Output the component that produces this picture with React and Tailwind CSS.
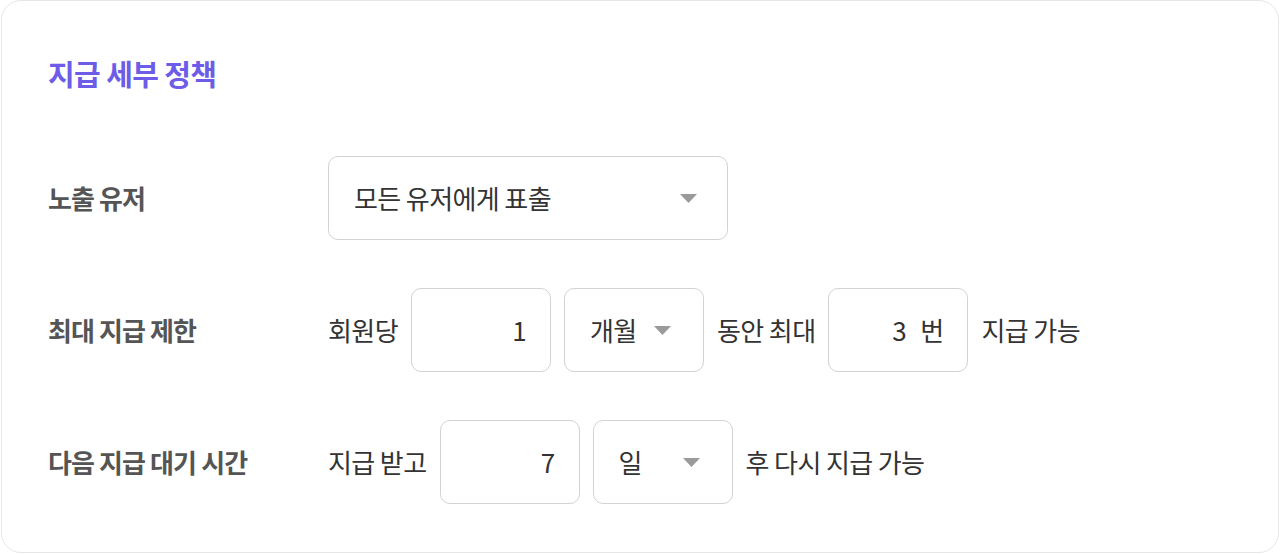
import React from 'react';

function Caret() {
  return (
    <svg className="w-[17px] h-[9px] flex-shrink-0" viewBox="0 0 17 9">
      <path d="M0 0h17L8.5 9z" fill="#9a9a9a" />
    </svg>
  );
}

function SelectBox({ value, className }) {
  return (
    <div className={`h-[84px] flex items-center justify-between border border-[#d2d2d2] rounded-[10px] bg-white pl-[25px] ${className}`}>
      <span className="text-[#333]">{value}</span>
      <Caret />
    </div>
  );
}

function NumberBox({ value, unit }) {
  return (
    <div className="w-[140px] h-[84px] flex-shrink-0 flex items-center justify-end gap-[14px] border border-[#d2d2d2] rounded-[10px] bg-white pr-[24px] text-[#333]">
      <span>{value}</span>
      {unit && <span>{unit}</span>}
    </div>
  );
}

function Row({ label, children }) {
  return (
    <div className="flex items-center">
      <div className="w-[280px] flex-shrink-0 font-bold text-[#555] tracking-[-0.9px]">{label}</div>
      <div className="flex items-center gap-[13px] text-[#333]">{children}</div>
    </div>
  );
}

export default function App() {
  return (
    <div
      className="bg-white text-[26px] leading-[34px] tracking-[-0.6px]"
      style={{ fontFamily: '"Noto Sans CJK KR", "Noto Sans", sans-serif' }}
    >
      <div className="mx-px border border-[#e6e6e6] rounded-[20px] bg-white pl-[46px] pr-[47px] pt-[55px] pb-[48px]">
        <h2 className="text-[29px] leading-[34px] font-bold tracking-[-0.6px] text-[#6c5ce7]">지급 세부 정책</h2>

        <div className="mt-[66px] flex flex-col gap-[48px]">
          <Row label="노출 유저">
            <SelectBox value="모든 유저에게 표출" className="w-[400px] pr-[30px]" />
          </Row>

          <Row label="최대 지급 제한">
            <span>회원당</span>
            <NumberBox value="1" />
            <SelectBox value="개월" className="w-[140px] pr-[32px]" />
            <span>동안 최대</span>
            <NumberBox value="3" unit="번" />
            <span>지급 가능</span>
          </Row>

          <Row label="다음 지급 대기 시간">
            <span>지급 받고</span>
            <NumberBox value="7" />
            <SelectBox value="일" className="w-[140px] pr-[32px]" />
            <span>후 다시 지급 가능</span>
          </Row>
        </div>
      </div>
    </div>
  );
}
